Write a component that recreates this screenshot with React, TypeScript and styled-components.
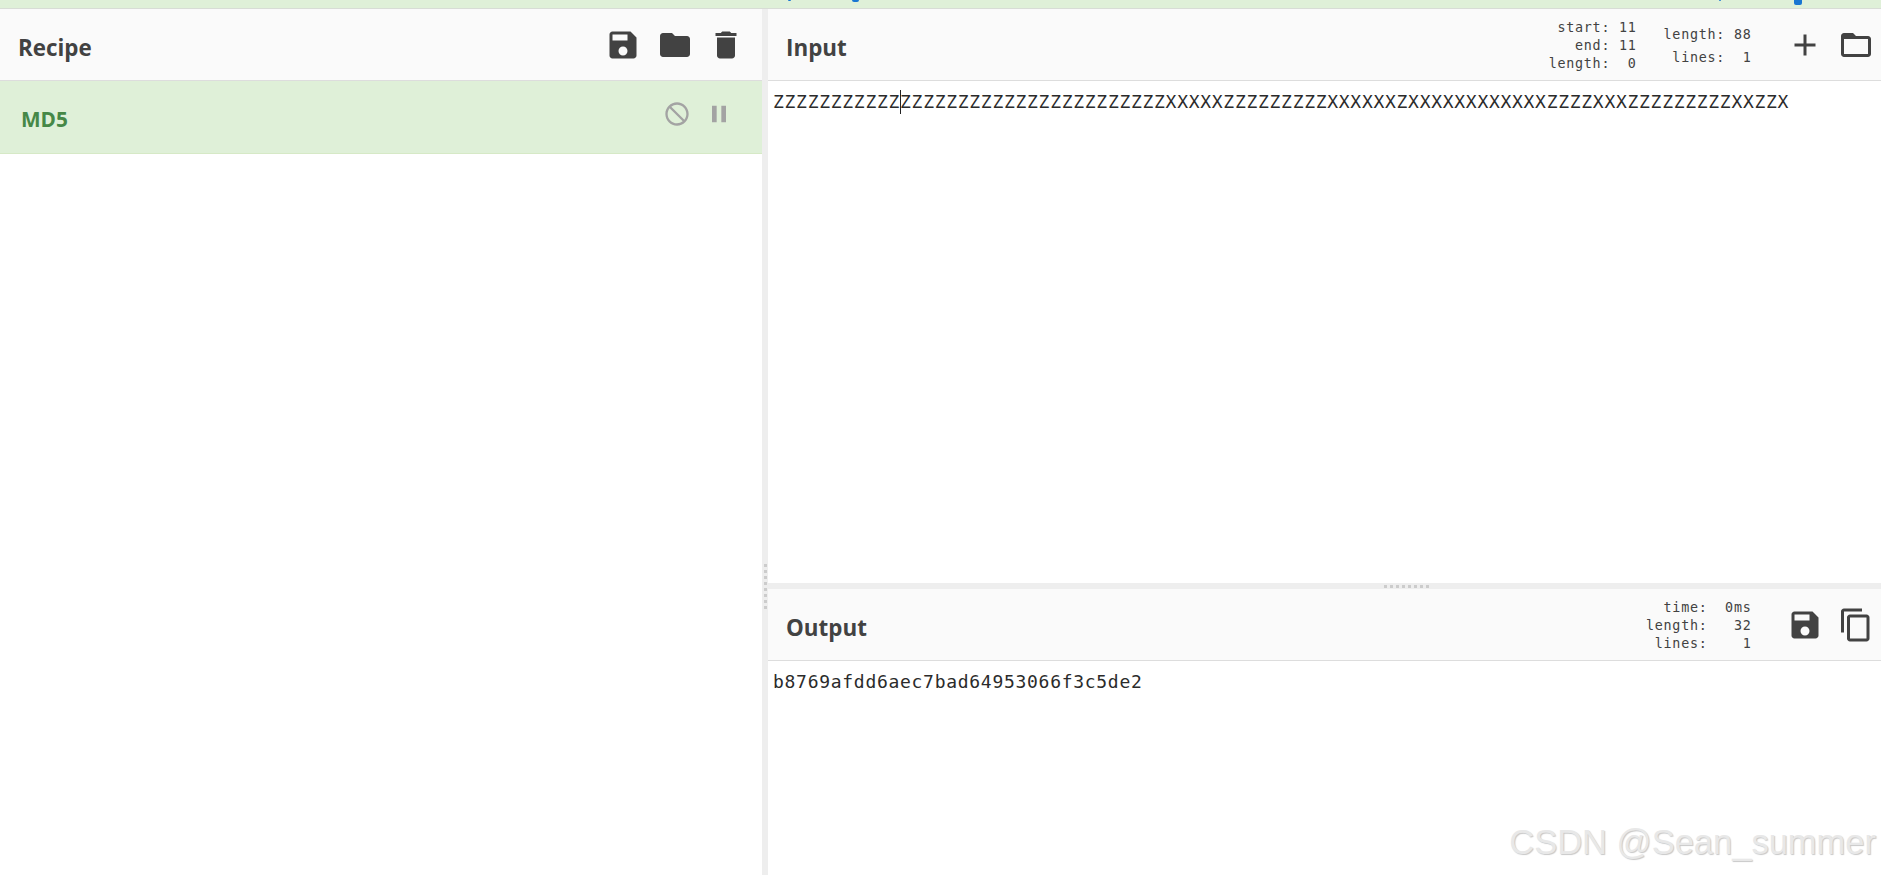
import styled, { createGlobalStyle } from 'styled-components';

const GlobalStyle = createGlobalStyle`
	html, body {
		margin: 0;
		padding: 0;
		height: 100%;
		background: #fff;
		overflow: hidden;
	}
	#root {
		height: 100%;
	}
`;

const Page = styled.div`
	position: relative;
	display: flex;
	flex-direction: column;
	width: 1881px;
	height: 875px;
	overflow: hidden;
	font-family: 'Open Sans', 'Noto Sans', sans-serif;
	color: #424242;
`;

const TopStrip = styled.div`
	position: relative;
	flex: 0 0 8px;
	height: 8px;
	background: #dff0d8;
	border-bottom: 1px solid #d8dcd6;
`;

const Speck = styled.span<{ $left: number; $width: number; $height: number }>`
	position: absolute;
	top: 0;
	left: ${(p) => p.$left}px;
	width: ${(p) => p.$width}px;
	height: ${(p) => p.$height}px;
	background: #1976d2;
	border-radius: 0 0 2px 2px;
`;

const Workspace = styled.div`
	flex: 1;
	min-height: 0;
	display: grid;
	grid-template-columns: 762px 6px 1fr;
`;

const Column = styled.section`
	display: flex;
	flex-direction: column;
	min-width: 0;
	min-height: 0;
`;

const SplitV = styled.div`
	display: flex;
	justify-content: center;
	background: #eee;
`;

const DotsV = styled.div`
	width: 3px;
	height: 45px;
	margin: 555px 0 0 1px;
	background: repeating-linear-gradient(to bottom, #ccc 0 3px, transparent 3px 6px);
`;

const SplitH = styled.div`
	flex: 0 0 6px;
	display: flex;
	justify-content: center;
	align-items: center;
	background: #eee;
`;

const DotsH = styled.div`
	width: 45px;
	height: 3px;
	margin-left: 163px;
	background: repeating-linear-gradient(to right, #ccc 0 3px, transparent 3px 6px);
`;

const Header = styled.header`
	flex: 0 0 71px;
	display: flex;
	align-items: center;
	background: #fafafa;
	border-bottom: 1px solid #ddd;
`;

const RecipeHeader = styled(Header)`
	padding: 0 18px 0 18px;
`;

const PaneHeader = styled(Header)`
	padding: 0 7px 0 18px;
`;

const Title = styled.h2`
	margin: 0;
	flex: 1;
	font-size: 22.4px;
	line-height: 30px;
	font-weight: 700;
	color: #424242;
	padding-top: 6px;
`;

const Stats = styled.div`
	display: flex;
	align-items: center;
	gap: 27px;
	margin-right: 35px;
`;

const StatLines = styled.pre<{ $gap?: number }>`
	margin: 0;
	display: flex;
	flex-direction: column;
	gap: ${(p) => p.$gap ?? 0}px;
	text-align: right;
	font-family: 'DejaVu Sans Mono', monospace;
	font-size: 13.4px;
	letter-spacing: 0.73px;
	line-height: 18px;
	color: #424242;
	padding-top: 3px;
`;

const IconGroup = styled.div`
	display: flex;
	gap: 15.5px;
`;

const IconButton = styled.button<{ $size?: number; $muted?: boolean }>`
	display: block;
	width: ${(p) => p.$size ?? 36}px;
	height: ${(p) => p.$size ?? 36}px;
	padding: 0;
	border: 0;
	background: none;
	color: ${(p) => (p.$muted ? '#a3a3a3' : '#424242')};
	svg {
		display: block;
		width: 100%;
		height: 100%;
		fill: currentColor;
	}
`;

const Operation = styled.div`
	flex: 0 0 73px;
	box-sizing: border-box;
	display: flex;
	align-items: center;
	justify-content: space-between;
	background: #dff0d8;
	border-bottom: 1px solid #d6e9c6;
	padding: 0 29px 0 21px;
`;

const OperationName = styled.div`
	font-size: 20.8px;
	line-height: 26px;
	font-weight: 700;
	color: #468847;
	padding-top: 3px;
`;

const OperationActions = styled.div`
	display: flex;
	gap: 14px;
	margin-bottom: 6px;
`;

const Pane = styled.div<{ $grow?: boolean }>`
	display: flex;
	flex-direction: column;
	flex: ${(p) => (p.$grow ? '1' : '0 0 574px')};
	min-height: 0;
`;

const TextArea = styled.div`
	flex: 1;
	padding: 9px 5px;
	font-family: 'DejaVu Sans Mono', monospace;
	font-size: 18px;
	letter-spacing: 0.71px;
	line-height: 24px;
	color: #2b2b2b;
	white-space: pre;
	background: #fff;
`;

const Caret = styled.span`
	position: relative;
	&::after {
		content: '';
		position: absolute;
		left: 0;
		top: -1px;
		width: 1px;
		height: 24px;
		background: #222;
	}
`;

const Watermark = styled.div`
	position: absolute;
	right: 5px;
	bottom: 13px;
	font-family: 'Liberation Sans', Arial, sans-serif;
	font-size: 34.5px;
	line-height: 40px;
	color: #e8e8e8;
	text-shadow: 1px 1px 1px #c8c8c8;
	white-space: nowrap;
`;

const paths = {
	save: 'M17 3H5c-1.11 0-2 .9-2 2v14c0 1.1.89 2 2 2h14c1.1 0 2-.9 2-2V7l-4-4zm-5 16c-1.66 0-3-1.34-3-3s1.34-3 3-3 3 1.34 3 3-1.34 3-3 3zm3-10H5V5h10v4z',
	folder: 'M10 4H4c-1.1 0-1.99.9-1.99 2L2 18c0 1.1.9 2 2 2h16c1.1 0 2-.9 2-2V8c0-1.1-.9-2-2-2h-8l-2-2z',
	folderOpen: 'M20 6h-8l-2-2H4c-1.1 0-1.99.9-1.99 2L2 18c0 1.1.9 2 2 2h16c1.1 0 2-.9 2-2V8c0-1.1-.9-2-2-2zm0 12H4V8h16v10z',
	trash: 'M6 19c0 1.1.9 2 2 2h8c1.1 0 2-.9 2-2V7H6v12zM19 4h-3.5l-1-1h-5l-1 1H5v2h14V4z',
	plus: 'M19 13h-6v6h-2v-6H5v-2h6V5h2v6h6v2z',
	copy: 'M16 1H4c-1.1 0-2 .9-2 2v14h2V3h12V1zm3 4H8c-1.1 0-2 .9-2 2v14c0 1.1.9 2 2 2h11c1.1 0 2-.9 2-2V7c0-1.1-.9-2-2-2zm0 16H8V7h11v14z',
	block: 'M12 2C6.48 2 2 6.48 2 12s4.48 10 10 10 10-4.48 10-10S17.52 2 12 2zm0 18c-4.42 0-8-3.58-8-8 0-1.85.63-3.55 1.69-4.9L16.9 18.31C15.55 19.37 13.85 20 12 20zm6.31-3.1L7.1 5.69C8.45 4.63 10.15 4 12 4c4.42 0 8 3.58 8 8 0 1.85-.63 3.55-1.69 4.9z',
	pause: 'M6 19h4V5H6v14zm8-14v14h4V5h-4z',
};

function Icon({ name }: { name: keyof typeof paths }) {
	return (
		<svg viewBox="0 0 24 24" aria-hidden="true">
			<path d={paths[name]} />
		</svg>
	);
}

export default function App() {
	return (
		<Page>
			<GlobalStyle />
			<TopStrip>
				<Speck $left={788} $width={3} $height={1} />
				<Speck $left={852} $width={7} $height={2} />
				<Speck $left={1719} $width={2} $height={1} />
				<Speck $left={1794} $width={8} $height={5} />
			</TopStrip>
			<Workspace>
				<Column>
					<RecipeHeader>
						<Title>Recipe</Title>
						<IconGroup>
							<IconButton><Icon name="save" /></IconButton>
							<IconButton><Icon name="folder" /></IconButton>
							<IconButton><Icon name="trash" /></IconButton>
						</IconGroup>
					</RecipeHeader>
					<Operation>
						<OperationName>MD5</OperationName>
						<OperationActions>
							<IconButton $size={28} $muted><Icon name="block" /></IconButton>
							<IconButton $size={28} $muted><Icon name="pause" /></IconButton>
						</OperationActions>
					</Operation>
				</Column>
				<SplitV>
					<DotsV />
				</SplitV>
				<Column>
					<Pane>
						<PaneHeader>
							<Title>Input</Title>
							<Stats>
								<StatLines>
									<span>start: 11</span>
									<span>end: 11</span>
									<span>length:  0</span>
								</StatLines>
								<StatLines $gap={5}>
									<span>length: 88</span>
									<span>lines:  1</span>
								</StatLines>
							</Stats>
							<IconGroup>
								<IconButton><Icon name="plus" /></IconButton>
								<IconButton><Icon name="folderOpen" /></IconButton>
							</IconGroup>
						</PaneHeader>
						<TextArea>
							ZZZZZZZZZZZ<Caret />ZZZZZZZZZZZZZZZZZZZZZZZXXXXXZZZZZZZZZXXXXXXZXXXXXXXXXXXXZZZZXXXZZZZZZZZZXXZZX
						</TextArea>
					</Pane>
					<SplitH>
						<DotsH />
					</SplitH>
					<Pane $grow>
						<PaneHeader>
							<Title>Output</Title>
							<Stats>
								<StatLines>
									<span>time:  0ms</span>
									<span>length:   32</span>
									<span>lines:    1</span>
								</StatLines>
							</Stats>
							<IconGroup>
								<IconButton><Icon name="save" /></IconButton>
								<IconButton><Icon name="copy" /></IconButton>
							</IconGroup>
						</PaneHeader>
						<TextArea>b8769afdd6aec7bad64953066f3c5de2</TextArea>
					</Pane>
				</Column>
			</Workspace>
			<Watermark>CSDN @Sean_summer</Watermark>
		</Page>
	);
}
